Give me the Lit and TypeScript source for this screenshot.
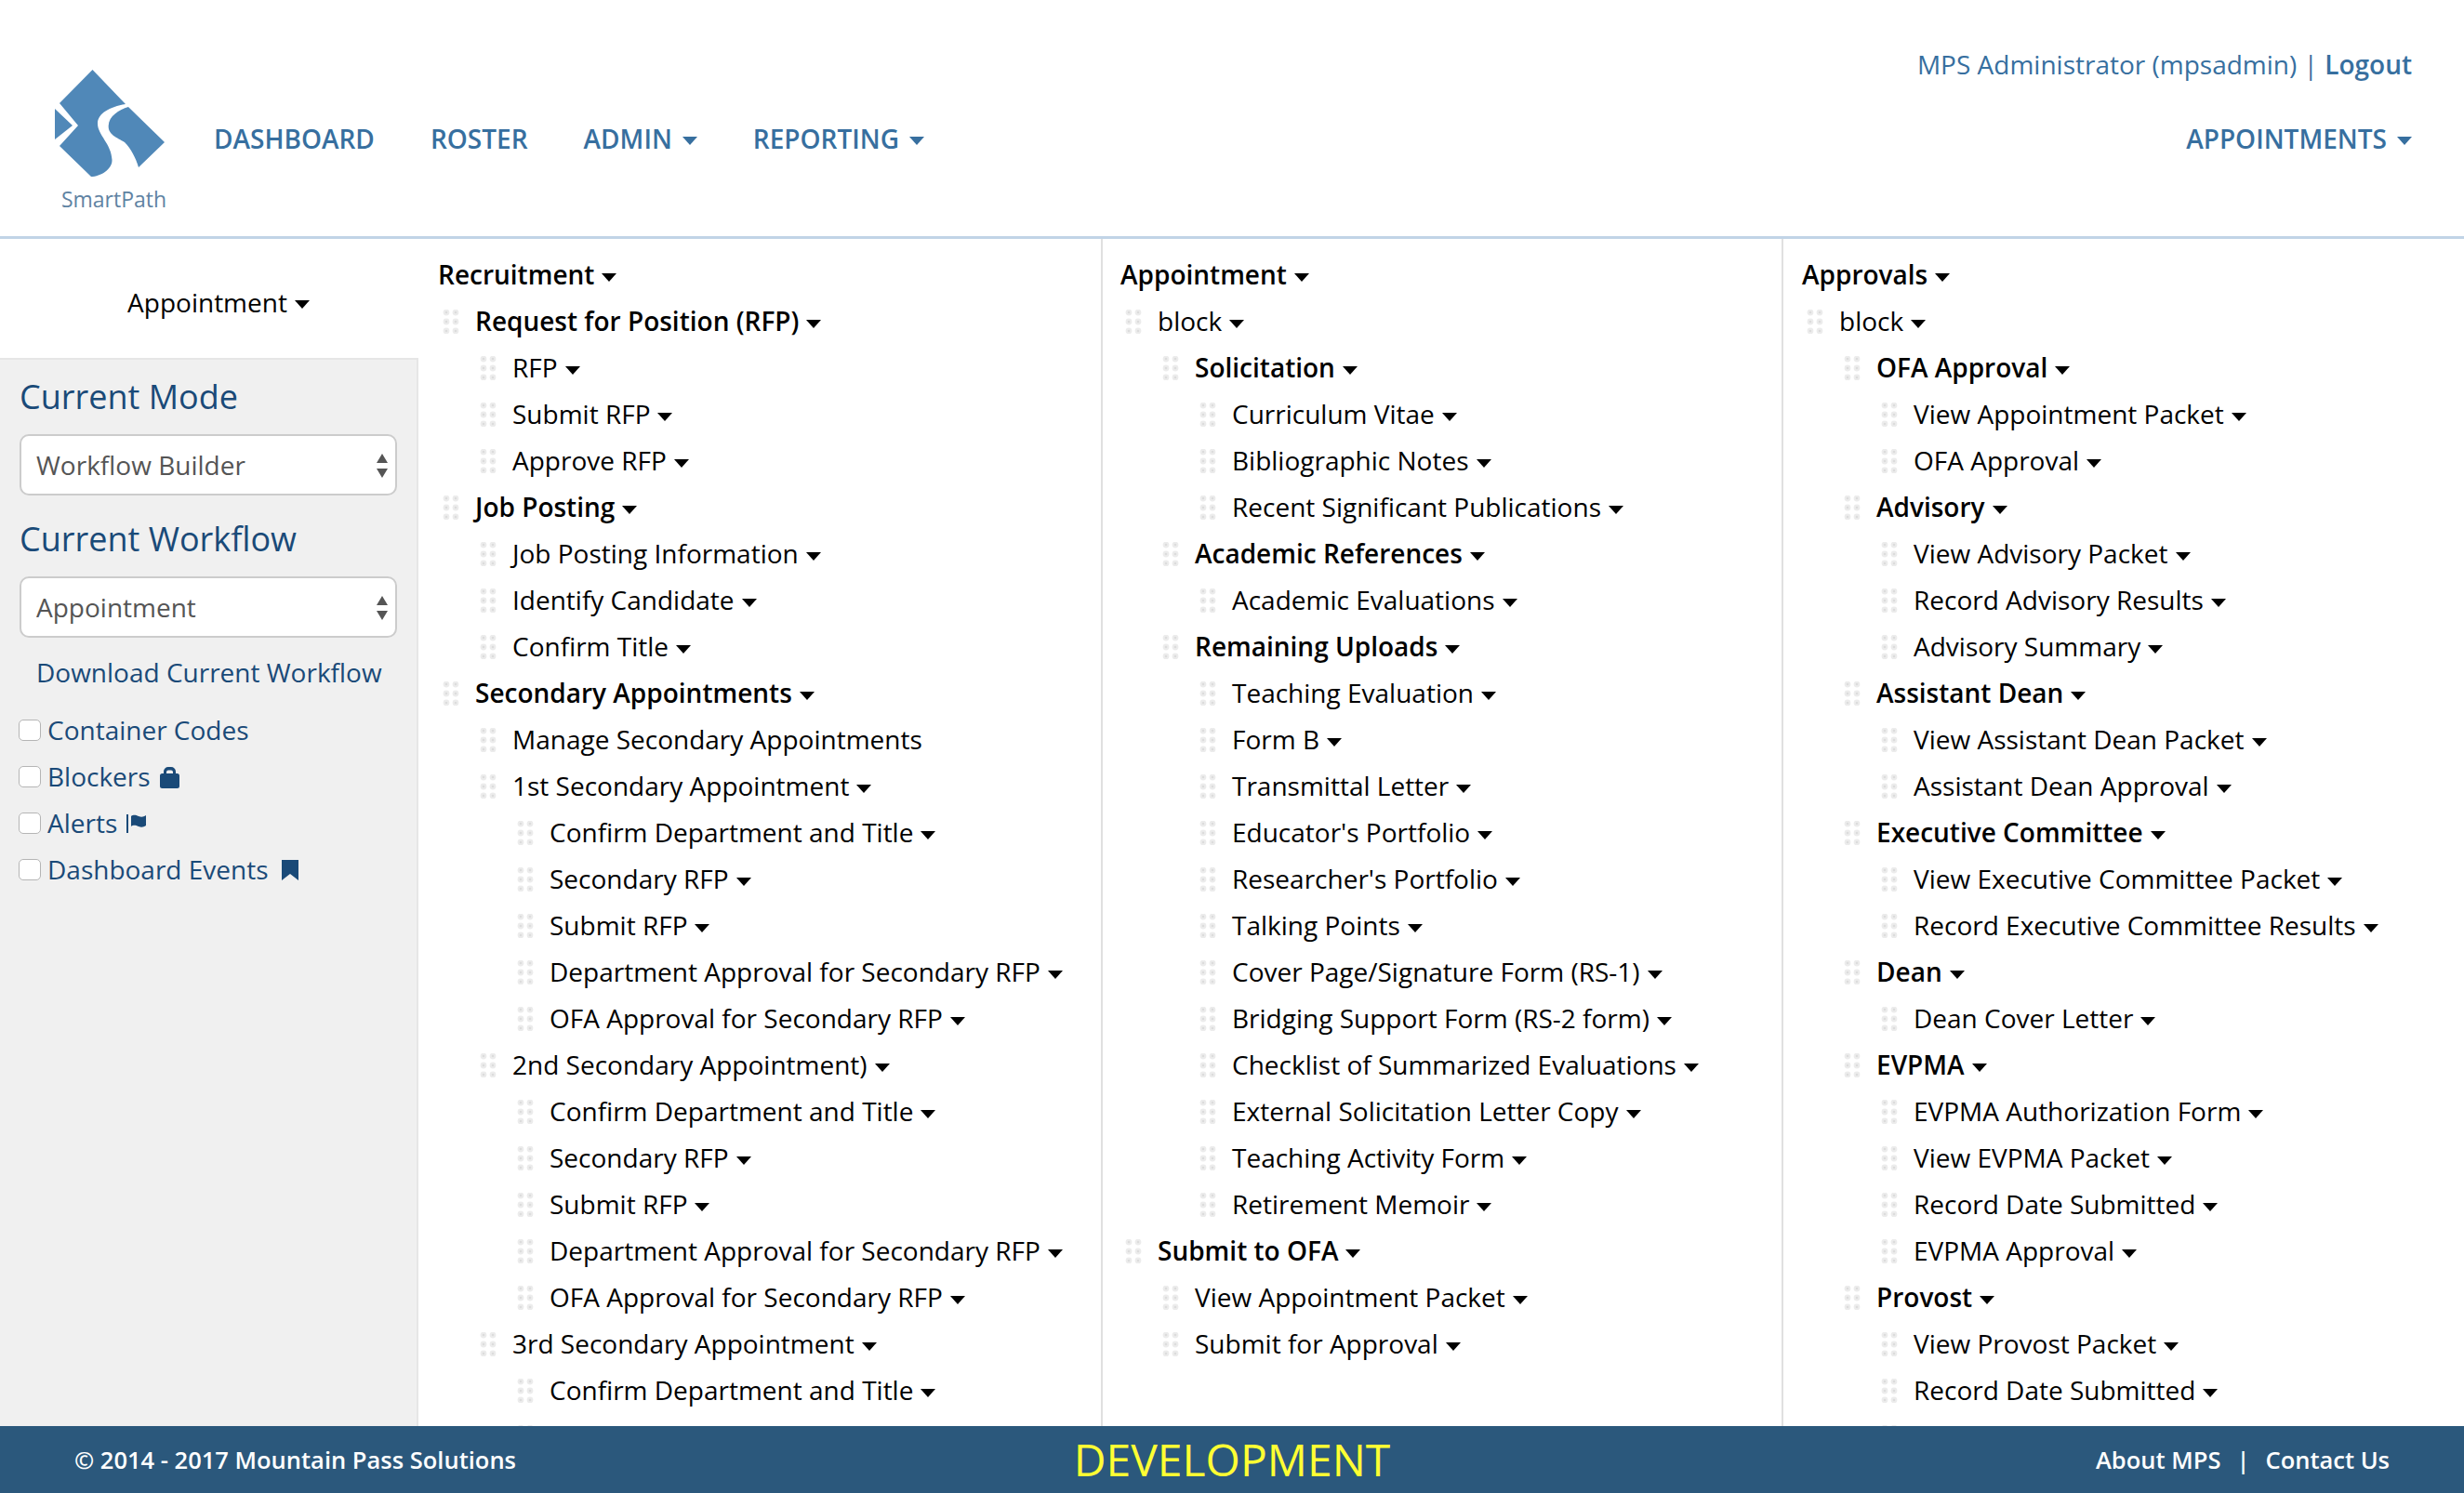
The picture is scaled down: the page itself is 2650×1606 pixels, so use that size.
import { LitElement, html, css, svg } from 'lit';
import { customElement } from 'lit/decorators.js';

// level, label, kind: 'b' is a bold row, 'x' a row without caret
type Row = [number, string, string?];

const col1: Row[] = [
  [0, 'Recruitment', 'b'],
  [1, 'Request for Position (RFP)', 'b'],
  [2, 'RFP'],
  [2, 'Submit RFP'],
  [2, 'Approve RFP'],
  [1, 'Job Posting', 'b'],
  [2, 'Job Posting Information'],
  [2, 'Identify Candidate'],
  [2, 'Confirm Title'],
  [1, 'Secondary Appointments', 'b'],
  [2, 'Manage Secondary Appointments', 'x'],
  [2, '1st Secondary Appointment'],
  [3, 'Confirm Department and Title'],
  [3, 'Secondary RFP'],
  [3, 'Submit RFP'],
  [3, 'Department Approval for Secondary RFP'],
  [3, 'OFA Approval for Secondary RFP'],
  [2, '2nd Secondary Appointment)'],
  [3, 'Confirm Department and Title'],
  [3, 'Secondary RFP'],
  [3, 'Submit RFP'],
  [3, 'Department Approval for Secondary RFP'],
  [3, 'OFA Approval for Secondary RFP'],
  [2, '3rd Secondary Appointment'],
  [3, 'Confirm Department and Title'],
  [3, '', 'x'],
];

const col2: Row[] = [
  [0, 'Appointment', 'b'],
  [1, 'block'],
  [2, 'Solicitation', 'b'],
  [3, 'Curriculum Vitae'],
  [3, 'Bibliographic Notes'],
  [3, 'Recent Significant Publications'],
  [2, 'Academic References', 'b'],
  [3, 'Academic Evaluations'],
  [2, 'Remaining Uploads', 'b'],
  [3, 'Teaching Evaluation'],
  [3, 'Form B'],
  [3, 'Transmittal Letter'],
  [3, "Educator's Portfolio"],
  [3, "Researcher's Portfolio"],
  [3, 'Talking Points'],
  [3, 'Cover Page/Signature Form (RS-1)'],
  [3, 'Bridging Support Form (RS-2 form)'],
  [3, 'Checklist of Summarized Evaluations'],
  [3, 'External Solicitation Letter Copy'],
  [3, 'Teaching Activity Form'],
  [3, 'Retirement Memoir'],
  [1, 'Submit to OFA', 'b'],
  [2, 'View Appointment Packet'],
  [2, 'Submit for Approval'],
];

const col3: Row[] = [
  [0, 'Approvals', 'b'],
  [1, 'block'],
  [2, 'OFA Approval', 'b'],
  [3, 'View Appointment Packet'],
  [3, 'OFA Approval'],
  [2, 'Advisory', 'b'],
  [3, 'View Advisory Packet'],
  [3, 'Record Advisory Results'],
  [3, 'Advisory Summary'],
  [2, 'Assistant Dean', 'b'],
  [3, 'View Assistant Dean Packet'],
  [3, 'Assistant Dean Approval'],
  [2, 'Executive Committee', 'b'],
  [3, 'View Executive Committee Packet'],
  [3, 'Record Executive Committee Results'],
  [2, 'Dean', 'b'],
  [3, 'Dean Cover Letter'],
  [2, 'EVPMA', 'b'],
  [3, 'EVPMA Authorization Form'],
  [3, 'View EVPMA Packet'],
  [3, 'Record Date Submitted'],
  [3, 'EVPMA Approval'],
  [2, 'Provost', 'b'],
  [3, 'View Provost Packet'],
  [3, 'Record Date Submitted'],
  [3, '', 'x'],
];

const handleDots = [0, 1, 2].flatMap((r) =>
  [0, 1].map((c) => svg`
    <circle cx=${4 + c * 10} cy=${3 + r * 10} r="3.4" fill="#ececec"></circle>
    <circle cx=${4 + c * 10} cy=${3 + r * 10} r="1.3" fill="#dcdcdc"></circle>`)
);

@customElement('app-root')
export class AppRoot extends LitElement {
  static styles = css`
    :host {
      display: flex;
      flex-direction: column;
      width: 2650px;
      height: 1606px;
      overflow: hidden;
      background: #fff;
      font-family: "Open Sans", sans-serif;
      font-size: 28px;
      color: #000;
    }

    .header {
      flex: none;
      height: 257px;
      box-sizing: border-box;
      border-bottom: 3px solid #c1d4e6;
      display: flex;
      justify-content: space-between;
      padding: 0 56px;
      color: #376f9f;
    }

    .brand {
      display: flex;
      flex-direction: column;
      align-items: center;
      padding-top: 74px;
      width: 124px;
    }

    .brand svg {
      display: block;
    }

    .brand span {
      font-size: 23px;
      line-height: 26px;
      color: #5f83a3;
      margin-top: 11px;
      margin-left: 9px;
    }

    .nav {
      flex: 1;
      display: flex;
      align-items: flex-start;
      gap: 60px;
      padding: 130px 0 0 50px;
      font-weight: 600;
      line-height: 38px;
    }

    .nav-item {
      display: flex;
      align-items: center;
    }

    .nav-item .caret {
      margin-left: 11px;
    }

    .account {
      display: flex;
      flex-direction: column;
      align-items: flex-end;
      padding-top: 50px;
      line-height: 38px;
    }

    .user b {
      font-weight: 600;
    }

    .account .nav-item {
      margin-top: 42px;
      font-weight: 600;
    }

    .caret {
      display: inline-block;
      flex: none;
      width: 0;
      height: 0;
      margin-left: 8px;
      margin-top: 4px;
      border-top: 9px solid currentColor;
      border-left: 8.5px solid transparent;
      border-right: 8.5px solid transparent;
    }

    .main {
      flex: 1;
      min-height: 0;
      display: flex;
    }

    .sidebar {
      flex: none;
      width: 450px;
      box-sizing: border-box;
      background: #f0f0f0;
      border-right: 2px solid #e6e6e6;
      color: #1a4a78;
    }

    .tab {
      height: 130px;
      box-sizing: border-box;
      background: #fff;
      border-bottom: 2px solid #e6e6e6;
      margin-right: -2px;
      display: flex;
      align-items: center;
      justify-content: center;
      color: #000;
      padding: 8px 0 0 20px;
    }

    .controls {
      padding: 15px 21px 0;
    }

    h2 {
      margin: 0;
      font-size: 36px;
      font-weight: 400;
      line-height: 50px;
    }

    .select + h2 {
      margin-top: 22px;
    }

    .select {
      position: relative;
      width: 406px;
      height: 66px;
      margin-top: 15px;
    }

    select {
      appearance: none;
      display: block;
      width: 100%;
      height: 100%;
      box-sizing: border-box;
      border: 2px solid #ccc;
      border-radius: 10px;
      background: #fff;
      padding: 0 16px;
      font: inherit;
      color: #555;
    }

    .select svg {
      position: absolute;
      right: 9px;
      top: 21px;
    }

    .download {
      display: block;
      margin: 12px 0 0 18px;
      line-height: 50px;
      white-space: nowrap;
    }

    .checks {
      margin-top: 12px;
    }

    label {
      display: flex;
      align-items: center;
      height: 50px;
      white-space: nowrap;
    }

    input[type='checkbox'] {
      appearance: none;
      width: 24px;
      height: 23px;
      margin: 0 7px 0 -1px;
      flex: none;
      box-sizing: border-box;
      border: 1.5px solid #b5b5b5;
      border-radius: 5px;
      background: #fff;
    }

    label svg {
      margin: 2px 0 0 10px;
      flex: none;
    }

    label svg.bookmark {
      margin-left: 14px;
    }

    .columns {
      flex: 1;
      min-width: 0;
      display: grid;
      grid-template-columns: 734px 732px 1fr;
      overflow: hidden;
    }

    .col {
      box-sizing: border-box;
      height: 100%;
      overflow: hidden;
      padding: 14px 0 0 19px;
      border-left: 2px solid #e0e0e0;
    }

    .col:first-child {
      border-left: none;
      padding-left: 21px;
    }

    .col:last-child {
      padding-left: 20px;
    }

    .row {
      display: flex;
      align-items: center;
      height: 50px;
      white-space: nowrap;
    }

    .row svg {
      flex: none;
      margin-right: 17px;
    }

    .row span {
      margin-bottom: 3px;
    }

    .strong {
      font-weight: 600;
    }

    .footer {
      flex: none;
      height: 72px;
      background: #2b587c;
      color: #fff;
      display: grid;
      grid-template-columns: 1fr auto 1fr;
      align-items: center;
      padding: 0 80px;
      font-size: 25.5px;
      font-weight: 600;
    }

    .env {
      color: #ffff33;
      font-size: 48px;
      font-weight: 400;
      line-height: 1;
    }

    .links {
      display: flex;
      justify-content: flex-end;
      gap: 17px;
    }
  `;

  private renderRow([level, label, kind]: Row) {
    return html`
      <div class="row ${kind === 'b' ? 'strong' : ''}" style="padding-left: ${level === 0 ? 0 : 5 + (level - 1) * 40}px">
        ${level > 0 ? html`<svg width="18" height="26" viewBox="0 0 18 26">${handleDots}</svg>` : ''}
        <span>${label}</span>
        ${kind === 'x' ? '' : html`<i class="caret"></i>`}
      </div>
    `;
  }

  private updown() {
    return html`<svg width="14" height="26" viewBox="0 0 14 26"><path fill="#555" d="M7 0l6 10H1ZM7 26 1 16h12Z"></path></svg>`;
  }

  render() {
    return html`
      <div class="header">
        <div class="brand">
          <svg width="124" height="116" viewBox="56 74 124 116">
            <path fill="#5088b8" d="M99.5 75 L135 112 C118 115 105 122 105 133 C105 145 120 155 120.5 172 C121 182 108 190 98 190 L64 157 L84 135 L64 111 Z"></path>
            <path fill="#5088b8" d="M59 117 L78 135 L59 150 Z"></path>
            <path fill="#5088b8" d="M138 115 L177 153 L149 180 C146 170 141 160 134 153 C126 148 116 145 116.7 135 C117 125 128 118 138 115 Z"></path>
          </svg>
          <span>SmartPath</span>
        </div>
        <div class="nav">
          <div class="nav-item">DASHBOARD</div>
          <div class="nav-item">ROSTER</div>
          <div class="nav-item">ADMIN<i class="caret"></i></div>
          <div class="nav-item">REPORTING<i class="caret"></i></div>
        </div>
        <div class="account">
          <div class="user">MPS Administrator (mpsadmin) | <b>Logout</b></div>
          <div class="nav-item">APPOINTMENTS<i class="caret"></i></div>
        </div>
      </div>
      <div class="main">
        <div class="sidebar">
          <div class="tab">Appointment<i class="caret"></i></div>
          <div class="controls">
            <h2>Current Mode</h2>
            <div class="select">
              <select><option>Workflow Builder</option></select>
              ${this.updown()}
            </div>
            <h2>Current Workflow</h2>
            <div class="select">
              <select><option>Appointment</option></select>
              ${this.updown()}
            </div>
            <a class="download">Download Current Workflow</a>
            <div class="checks">
              <label><input type="checkbox" />Container Codes</label>
              <label><input type="checkbox" />Blockers
                <svg width="21" height="23" viewBox="0 0 21 23"><path fill="#1a4a78" fill-rule="evenodd" d="M4 7V5a5 5 0 0 1 5-5h3a5 5 0 0 1 5 5v2h1.5A2.5 2.5 0 0 1 21 9.5v11a2.5 2.5 0 0 1-2.5 2.5h-16A2.5 2.5 0 0 1 0 20.5v-11A2.5 2.5 0 0 1 2.5 7Zm3 0h7V5.5a2 2 0 0 0-2-2h-3a2 2 0 0 0-2 2Z"></path></svg>
              </label>
              <label><input type="checkbox" />Alerts
                <svg width="21" height="20" viewBox="0 0 21 20"><path fill="#1a4a78" d="M0 0h2v20H0ZM5 2c3-2 5-1 8 0 3 1 5 1 8-1v11c-3 2-5 2-8 1-3-1-5-2-8 0Z"></path></svg>
              </label>
              <label><input type="checkbox" />Dashboard Events
                <svg class="bookmark" width="18" height="22" viewBox="0 0 18 22"><path fill="#1a4a78" d="M0 0h18v22l-9-7-9 7Z"></path></svg>
              </label>
            </div>
          </div>
        </div>
        <div class="columns">
          ${[col1, col2, col3].map((rows) => html`<div class="col">${rows.map((r) => this.renderRow(r))}</div>`)}
        </div>
      </div>
      <div class="footer">
        <div>© 2014 - 2017 Mountain Pass Solutions</div>
        <div class="env">DEVELOPMENT</div>
        <div class="links"><span>About MPS</span><span>|</span><span>Contact Us</span></div>
      </div>
    `;
  }
}
